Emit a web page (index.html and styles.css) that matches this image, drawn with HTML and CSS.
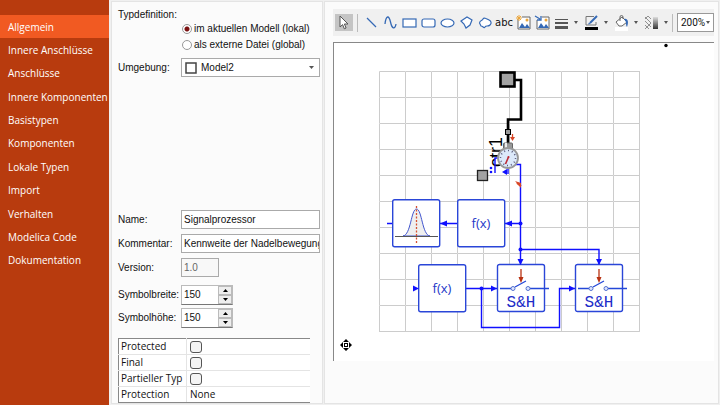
FILE: index.html
```html
<!DOCTYPE html>
<html lang="de">
<head>
<meta charset="utf-8">
<title>Typdefinition</title>
<link rel="stylesheet" href="styles.css">
</head>
<body>
<div class="app">
  <div class="sidebar">
    <nav class="nav">
      <a class="nav-item active" href="#">Allgemein</a>
      <a class="nav-item" href="#">Innere Anschlüsse</a>
      <a class="nav-item" href="#">Anschlüsse</a>
      <a class="nav-item" href="#">Innere Komponenten</a>
      <a class="nav-item" href="#">Basistypen</a>
      <a class="nav-item" href="#">Komponenten</a>
      <a class="nav-item" href="#">Lokale Typen</a>
      <a class="nav-item" href="#">Import</a>
      <a class="nav-item" href="#">Verhalten</a>
      <a class="nav-item" href="#">Modelica Code</a>
      <a class="nav-item" href="#">Dokumentation</a>
    </nav>
  </div>

  <form class="panel settings">
    <div class="caption" id="scope-label">Typdefinition:</div>
    <div class="radios" role="radiogroup" aria-labelledby="scope-label">
      <label class="radio"><input type="radio" name="scope" checked>im aktuellen Modell (lokal)</label>
      <label class="radio"><input type="radio" name="scope">als externe Datei (global)</label>
    </div>
    <div class="field">
      <label for="env">Umgebung:</label>
      <div class="combo">
        <svg class="combo-icon" viewBox="0 0 12 12"><rect x="1" y="1" width="10" height="10" fill="#fff" stroke="#444" stroke-width="1.5"/></svg>
        <select id="env"><option>Model2</option></select>
        <svg class="caret" viewBox="0 0 5 3"><path d="M0 0h5L2.5 3z" fill="#555"/></svg>
      </div>
    </div>
    <div class="fields">
      <div class="field"><label for="name">Name:</label><input class="text" id="name" type="text" value="Signalprozessor"></div>
      <div class="field"><label for="comment">Kommentar:</label><input class="text" id="comment" type="text" value="Kennweite der Nadelbewegung"></div>
      <div class="field"><label for="version">Version:</label><input class="text version" id="version" type="text" value="1.0" disabled></div>
    </div>
    <div class="sizes">
      <div class="field"><label for="sw">Symbolbreite:</label>
        <div class="spin"><input id="sw" type="text" value="150"><div class="steps">
          <button type="button" aria-label="Breite erhöhen"><svg viewBox="0 0 5 3"><path d="M0 3h5L2.500 0z"/></svg></button>
          <button type="button" aria-label="Breite verringern"><svg viewBox="0 0 5 3"><path d="M0 0h5L2.500 3z"/></svg></button></div></div>
      </div>
      <div class="field"><label for="sh">Symbolhöhe:</label>
        <div class="spin"><input id="sh" type="text" value="150"><div class="steps">
          <button type="button" aria-label="Höhe erhöhen"><svg viewBox="0 0 5 3"><path d="M0 3h5L2.500 0z"/></svg></button>
          <button type="button" aria-label="Höhe verringern"><svg viewBox="0 0 5 3"><path d="M0 0h5L2.500 3z"/></svg></button></div></div>
      </div>
    </div>
    <table class="props">
      <tr><th scope="row"><label for="p1">Protected</label></th><td><input id="p1" type="checkbox"></td></tr>
      <tr><th scope="row"><label for="p2">Final</label></th><td><input id="p2" type="checkbox"></td></tr>
      <tr><th scope="row"><label for="p3">Partieller Typ</label></th><td><input id="p3" type="checkbox"></td></tr>
      <tr><th scope="row">Protection</th><td>None</td></tr>
    </table>
  </form>

  <main class="panel editor">
    <div class="toolbar" role="toolbar">
      <button class="tool pressed" aria-label="Auswahl"><svg viewBox="0 0 17 17"><path d="M5 2v11l2.600-2.400 1.700 4.200 1.800-.8-1.700-4h3.600z" fill="#fff" stroke="#555"/></svg></button>
      <span class="sep"></span>
      <button class="tool" aria-label="Linie"><svg viewBox="0 0 17 17"><path d="M4 4l9 9" stroke="#3569b5" stroke-width="1.300"/></svg></button>
      <button class="tool" aria-label="Kurve"><svg viewBox="0 0 17 17"><path d="M3 10C4 1 7 1 8.500 8S13 16 14 10" fill="none" stroke="#3569b5" stroke-width="1.300"/></svg></button>
      <button class="tool" aria-label="Rechteck"><svg viewBox="0 0 17 17"><rect x="2" y="5" width="13" height="8" fill="#fff" stroke="#3569b5" stroke-width="1.200"/></svg></button>
      <button class="tool" aria-label="Abgerundetes Rechteck"><svg viewBox="0 0 17 17"><rect x="2" y="5" width="13" height="8" rx="2" fill="#fff" stroke="#3569b5" stroke-width="1.200"/></svg></button>
      <button class="tool" aria-label="Ellipse"><svg viewBox="0 0 17 17"><ellipse cx="8.500" cy="9" rx="6.500" ry="4" fill="#fff" stroke="#3569b5" stroke-width="1.200"/></svg></button>
      <button class="tool" aria-label="Polygon"><svg viewBox="0 0 17 17"><path d="M3 7l6-4 5 3-2 5-4 3-2-4z" fill="#fff" stroke="#3569b5" stroke-width="1.200"/></svg></button>
      <button class="tool" aria-label="Freiform"><svg viewBox="0 0 17 17"><path d="M2.500 9C3 6 5 7 6 5s4 0 6 1 3 3 1 5-4 0-5 2-2-1-4-1z" fill="#fff" stroke="#3569b5" stroke-width="1.200"/></svg></button>
      <button class="tool abc">abc</button>
      <button class="tool" aria-label="Bild"><svg viewBox="0 0 17 17"><path d="M3 5v10h12V3H7" fill="#fff" stroke="#666"/><path d="M4 14l3-5 3 4 2-3 3 4z" fill="#3569b5"/><circle cx="12" cy="6" r="1.500" fill="#eba53a"/><path d="M4 1v6M1 4h6M2 2l4 4M6 2L2 6" stroke="#eba53a"/></svg></button>
      <button class="tool" aria-label="Bild einfügen"><svg viewBox="0 0 17 17"><path d="M3 6v9h12V3H8" fill="#fff" stroke="#666"/><path d="M4 14l3-5 3 4 2-3 3 4z" fill="#3569b5"/><circle cx="12" cy="6" r="1.500" fill="#eba53a"/><path d="M1 2l5 3M3 6h4V2" fill="none" stroke="#3569b5" stroke-width="1.300"/></svg></button>
      <button class="tool menu" aria-label="Linienart"><svg viewBox="0 0 17 17"><path d="M2 5.500h13" stroke="#555"/><path d="M2 9h13" stroke="#555" stroke-width="2"/><path d="M2 13.500h13" stroke="#555" stroke-width="3"/></svg><i></i></button>
      <button class="tool menu" aria-label="Linienfarbe"><svg viewBox="0 0 17 17"><path d="M11 2.500H3V11h10V8" fill="none" stroke="#777"/><path d="M7 9l7-7" stroke="#3569b5" stroke-width="2"/><path d="M5 10.500L7.500 10 6 8.500z" fill="#3569b5"/><path d="M2 13h13v3H2z"/></svg><i></i></button>
      <button class="tool menu" aria-label="Füllfarbe"><svg viewBox="0 0 17 17"><path d="M2 13h13v4H2z" fill="#fff"/><path d="M3 8l6-5 5 5-5 4H6z" fill="#fff" stroke="#666"/><path d="M7 7V3a1.500 1.500 0 0 1 3 0v2" fill="none" stroke="#666"/><path d="M11 5c4-1 5 3 3 8-1-1-1-3-1-5z" fill="#3569b5"/></svg><i></i></button>
      <button class="tool menu" aria-label="Füllmuster"><svg viewBox="0 0 17 17"><defs><linearGradient id="shade" x2="0" y2="1"><stop stop-color="#ddd"/><stop offset="1" stop-color="#333"/></linearGradient></defs><path d="M2 3l6 6M2 7l6 6M2 11l4 4M5 2l3 3M2 5l3-3M2 15l6-6" stroke="#777" stroke-width=".8"/><path d="M10 3h5v12h-5z" fill="url(#shade)"/></svg><i></i></button>
      <span class="sep"></span>
      <label class="zoom"><select aria-label="Zoom"><option>200%</option></select><i></i></label>
    </div>
    <div class="canvas">
      <svg class="diagram" viewBox="334 43 380 318" role="img" aria-label="Modelldiagramm">
        <defs>
          <pattern id="grid" x="379" y="71" width="26" height="26" patternUnits="userSpaceOnUse"><path d="M26 .5H.5V26" fill="none" stroke="#ccc"/></pattern>
          <g id="hold">
            <rect x=".5" y=".5" width="47" height="47" rx="2" fill="#fff" stroke="#2a46d8" stroke-width="1.400"/>
            <path d="M3 24.500h11M18 23l11-6M33 24.500h19" fill="none" stroke="#2448d8" stroke-width="1.300"/>
            <circle cx="16" cy="24.500" r="2" fill="#dde5ff" stroke="#5572cf"/><circle cx="31" cy="24.500" r="2" fill="#dde5ff" stroke="#5572cf"/>
            <path d="M24 5v10" stroke="#b83212" stroke-width="1.300"/><path d="M21.500 13h5L24 19z" fill="#b83212"/>
            <text class="code" x="24" y="43" text-anchor="middle">S&amp;H</text>
          </g>
        </defs>
        <rect x="379" y="71" width="261" height="261" fill="url(#grid)"/>
        <path d="M379 331.500h260.500V71" fill="none" stroke="#ccc"/>
        <circle cx="666" cy="45.500" r="1.700"/>
        <path d="M514 80h7v39.500h-13V146" fill="none" stroke="#000" stroke-width="2.600"/>
        <rect x="500.500" y="72.500" width="14" height="14" fill="#a2a2a2" stroke="#000" stroke-width="2.600"/>
        <rect x="505.500" y="129.500" width="5" height="5" fill="#999" stroke="#000"/>
        <path d="M512.500 134v4" stroke="#d84727" stroke-width="1.300"/><path d="M510 137h5l-2.500 4z" fill="#d84727"/>
        <text class="name" transform="translate(502 167) rotate(-90)">ctr1</text>
        <g fill="none" stroke="#1010ff" stroke-width="1.400">
          <path d="M495 173v-15h4M508 168v6M514 164.500h6.500V266M520.500 249.500h78.500V266M520.500 223.500H505M458 223.500h-18M393 223.500h-6M466 288.500h31M481.500 288.500v39h78v-39H575"/>
        </g>
        <circle cx="491" cy="168" r="1.300" fill="#1010ff"/><circle cx="491" cy="172" r="1.300" fill="#1010ff"/><path d="M502 172l5-3v6z" fill="#1010ff"/>
        <rect x="503.500" y="143" width="9" height="7" rx="1" fill="#999" stroke="#666"/><path d="M506 143v5" stroke="#eee" stroke-width="2"/>
        <circle cx="508" cy="158" r="10" fill="#dce9fa" stroke="#999" stroke-width="1.800"/>
        <circle cx="508" cy="158" r="7.500" fill="none" stroke="#557" stroke-width="1.500" stroke-dasharray="1 2.900"/>
        <path d="M508.500 157l-3 7" stroke="#bd2832" stroke-width="1.600"/><circle cx="508.500" cy="157" r="1" fill="#bd2832"/>
        <rect x="477.500" y="170.500" width="10" height="10" fill="#a2a2a2" stroke="#222" stroke-width="1.300"/>
        <path d="M515 181l6 2v5z" fill="#d84727"/><path d="M517 183l4 3" stroke="#d84727" stroke-width="2"/>
        <rect x="392.700" y="199.700" width="47" height="47" rx="2" fill="#fff" stroke="#2a46d8" stroke-width="1.400"/>
        <path d="M403 236c8-1 8-27 13.500-27s5.500 26 13.500 27z" fill="#efefef" stroke="#4256cf"/>
        <path d="M395 236.500h43" stroke="#555"/><path d="M416.500 206v37" stroke="#d65130" stroke-width="1.300" stroke-dasharray="2 1.500"/>
        <rect x="457.700" y="199.700" width="47" height="47" rx="2" fill="#fff" stroke="#2a46d8" stroke-width="1.400"/>
        <text class="fx" x="481" y="228" text-anchor="middle">f(x)</text>
        <rect x="418.700" y="264.700" width="47" height="47" rx="2" fill="#fff" stroke="#2a46d8" stroke-width="1.400"/>
        <text class="fx" x="442" y="293" text-anchor="middle">f(x)</text>
        <use href="#hold" x="497" y="264"/><use href="#hold" x="575" y="264"/>
        <g fill="#1010ff"><path d="M440 223.500l7-3v6zM505 223.500l7-3v6zM419 288.500l-6-3v6zM497 288.500l-6-3v6zM575 288.500l-6-3v6zM520.500 265l-3-6h6zM599 265l-3-6h6z"/>
          <circle cx="520.500" cy="223.500" r="2"/><circle cx="520.500" cy="249.500" r="2"/><circle cx="481.500" cy="288.500" r="2"/></g>
        <g fill="#000"><path d="M346 339l-3 3h6zM346 351l-3-3h6zM340 345l3-3v6zM352 345l-3-3v6z"/><rect x="344.500" y="343.500" width="3" height="3" fill="#fff" stroke="#000"/></g>
      </svg>
    </div>
  </main>
</div>
</body>
</html>
```
FILE: styles.css
```css
* { box-sizing: border-box; }
body { margin: 0; background: #f0f0f0; color: #111; font: 10px/14px "Liberation Sans", sans-serif; }
.app { display: flex; min-height: 100vh; padding: 0 1px 0 0; }
svg { display: block; }
button, input, select { font: inherit; color: inherit; margin: 0; border-radius: 0; }

.sidebar { flex: 0 0 109px; padding-top: 15px; background: #b83b0e; }
.nav { display: grid; grid-auto-rows: 1fr; height: 257px; }
.nav-item { display: flex; align-items: center; padding-left: 8px; color: #fff; text-decoration: none; white-space: nowrap; font: 10px/16px "Open Sans", sans-serif; }
.nav-item.active { background: #f15a22; }

.panel { background: #fbfbfb; border: 1px solid #e4e4e4; margin: 1px 0 2px; }
.settings { flex: 0 0 212px; margin-left: 2px; padding: 6px 2px 0 6px; display: flex; flex-direction: column; }
.radios { padding-left: 64px; display: grid; gap: 2px; }
.radio { display: flex; align-items: center; gap: 2px; white-space: nowrap; }
.radio input { appearance: none; width: 10px; height: 10px; border: 1px solid #999; border-radius: 50%; background: #fff; }
.radio input:checked { background: radial-gradient(#7a1010 0 2px, #fff 3px); }
.radios + .field { margin-top: 6px; }
.field { display: grid; grid-template-columns: 63px 1fr; align-items: center; }
.combo { position: relative; height: 19px; display: flex; align-items: center; gap: 4px; padding: 0 5px 0 3px; background: #fff; border: 1px solid #aaa; }
.combo-icon { width: 12px; height: 12px; }
.combo select { flex: 1; appearance: none; border: 0; background: none; padding: 0; }
.caret { width: 5px; height: 3px; }
.fields { display: grid; gap: 5px; margin-top: 133px; }
.text { width: 100%; height: 19px; padding: 0 0 0 2px; background: #fff; border: 1px solid #aaa; }
.text.version { width: 38px; background: #f8f8f8; color: #666; }
.sizes { display: grid; gap: 3px; margin-top: 8px; }
.spin { width: 52px; height: 20px; display: flex; background: #fff; border: 1px solid #bbb; border-bottom-color: #777; }
.spin input { flex: 1; min-width: 0; border: 0; background: none; padding: 0 2px; }
.steps { width: 14px; display: grid; }
.steps button { display: grid; place-items: center; padding: 0; background: #eee; border: 1px solid #bbb; min-height: 0; }
.steps svg { width: 5px; height: 3px; }

.props { width: 192px; margin-top: 10px; border-collapse: collapse; background: #fff; border: solid #888; border-width: 1px 0 1px 1px; font: 10px/15px "Open Sans", sans-serif; }
.props tr { height: 16px; }
.props th, .props td { height: 16px; padding: 0 3px; font-weight: normal; text-align: left; border: 1px solid #e4e4e4; border-width: 0 0 1px; white-space: nowrap; }
.props tr:last-child > * { border-bottom: 1px solid #888; }
.props th { width: 68px; border-right-width: 1px; padding: 0 2px; }
.props input { display: block; appearance: none; width: 12px; height: 12px; border: 1px solid #555; border-radius: 3px; background: #f4f4f4; }

.editor { flex: 1; min-width: 0; margin-left: 1px; padding: 7px 4px 0 8px; }
.toolbar { height: 27px; display: flex; align-items: center; background: #f0f0f0; padding-left: 2px; }
.tool { flex: 0 0 19px; height: 17px; padding: 0 1px; border: 0; background: none; display: flex; align-items: center; }
.tool svg { flex: 0 0 17px; height: 17px; }
.tool.pressed { background: #c4c4c4; flex-basis: 18px; padding: 0; }
.tool.abc { font: 10px/14px "DejaVu Sans", sans-serif; padding: 0; }
.tool.menu { flex-basis: 30px; gap: 4px; }
.toolbar i { flex: none; border: solid transparent; border-width: 3px 2px 0; border-top-color: #555; }
.sep { flex: 0 0 1px; height: 18px; margin: 0 4px; background: #bbb; }
.menu + .sep { margin-left: 0; }
.zoom { flex: 1; height: 19px; display: flex; align-items: center; background: #fff; border: 1px solid #999; padding: 0 3px; }
.zoom select { flex: 1; min-width: 0; appearance: none; border: 0; background: none; padding: 0; font: 10px/14px Roboto, sans-serif; }
.canvas { margin-top: 6px; background: #fff; border: solid #888; border-width: 1px 0 0 1px; overflow: hidden; }
.diagram { width: 380px; height: 318px; }
.fx { font: 13px "Open Sans", sans-serif; fill: #2638c8; }
.code { font: 16px "Liberation Mono", monospace; fill: #1c2cc8; }
.name { font: 18px "Liberation Sans", sans-serif; fill: #000; }
```
